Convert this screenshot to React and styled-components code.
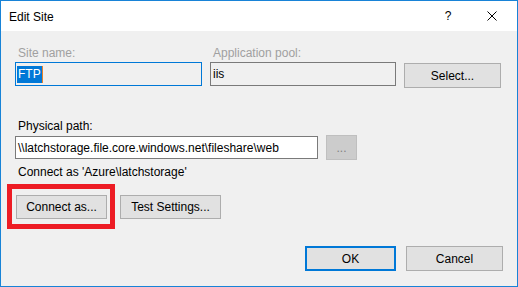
import React from "react";
import styled, { createGlobalStyle } from "styled-components";

const GlobalStyle = createGlobalStyle`
  html, body {
    margin: 0;
    padding: 0;
    background: #ffffff;
  }
  * {
    box-sizing: border-box;
  }
`;

function CloseIcon() {
  return (
    <svg width="10" height="10" viewBox="0 0 10 10">
      <path d="M0.5 0.5 L9.5 9.5 M9.5 0.5 L0.5 9.5" stroke="#000" strokeWidth="1" fill="none" />
    </svg>
  );
}

function Field({ label, disabled, width, children }) {
  return (
    <FieldGroup width={width}>
      <Label disabled={disabled}>{label}</Label>
      {children}
    </FieldGroup>
  );
}

export default function App() {
  return (
    <>
      <GlobalStyle />
      <Window>
        <TitleBar>
          <Title>Edit Site</Title>
          <TitleButtons>
            <Help>?</Help>
            <CloseButton>
              <CloseIcon />
            </CloseButton>
          </TitleButtons>
        </TitleBar>
        <Body>
          <TopRow>
            <Field label="Site name:" disabled width={187}>
              <TextBox focused readOnly>
                <Selection>FTP</Selection>
                <Caret />
              </TextBox>
            </Field>
            <Field label="Application pool:" disabled width={186}>
              <TextBox readOnly>iis</TextBox>
            </Field>
            <Button width={97} height={25} style={{ marginTop: 18 }}>
              Select...
            </Button>
          </TopRow>

          <PathBlock>
            <Label>Physical path:</Label>
            <PathRow>
              <TextBox width={303} height={23}>
                \\latchstorage.file.core.windows.net\fileshare\web
              </TextBox>
              <Button width={31} height={25} disabled>
                ...
              </Button>
            </PathRow>
          </PathBlock>

          <Info>Connect as 'Azure\latchstorage'</Info>

          <ActionRow>
            <Highlighted>
              <Button width={91} height={24}>
                Connect as...
              </Button>
              <RedFrame />
            </Highlighted>
            <Button width={101} height={24}>
              Test Settings...
            </Button>
          </ActionRow>

          <Footer>
            <Button width={91} height={25} primary>
              OK
            </Button>
            <Button width={97} height={25}>
              Cancel
            </Button>
          </Footer>
        </Body>
      </Window>
    </>
  );
}

const Window = styled.div`
  width: 518px;
  height: 287px;
  border: 1px solid #1883d7;
  display: flex;
  flex-direction: column;
  font-family: "Liberation Sans", Arial, sans-serif;
  font-size: 12px;
  color: #000;
`;

const TitleBar = styled.div`
  height: 30px;
  background: #ffffff;
  display: flex;
  align-items: center;
  justify-content: space-between;
  padding-left: 8px;
`;

const Title = styled.div`
  font-size: 12px;
  line-height: 16px;
  padding-top: 1px;
`;

const TitleButtons = styled.div`
  display: flex;
  align-items: center;
  height: 100%;
  padding-right: 2px;
`;

const Help = styled.div`
  width: 46px;
  text-align: center;
  font-size: 12px;
  line-height: 16px;
  padding-left: 4px;
`;

const CloseButton = styled.div`
  width: 46px;
  display: flex;
  justify-content: center;
  align-items: center;
`;

const Body = styled.div`
  flex: 1;
  background: #f0f0f0;
  padding: 14px 14px 15px 14px;
  display: flex;
  flex-direction: column;
`;

const TopRow = styled.div`
  display: flex;
  align-items: flex-start;
  gap: 8px;
`;

const FieldGroup = styled.div`
  width: ${({ width }) => width}px;
  display: flex;
  flex-direction: column;
`;

const Label = styled.div`
  line-height: 16px;
  margin-bottom: 1px;
  padding-left: 3px;
  color: ${({ disabled }) => (disabled ? "#a0a0a0" : "#000")};
`;

const TextBox = styled.div`
  width: ${({ width }) => (width ? `${width}px` : "100%")};
  height: ${({ height }) => height || 24}px;
  border: 1px solid ${({ focused }) => (focused ? "#0078d7" : "#7a7a7a")};
  background: ${({ readOnly }) => (readOnly ? "#f0f0f0" : "#ffffff")};
  display: flex;
  align-items: center;
  padding-left: 2px;
  white-space: nowrap;
  overflow: hidden;
`;

const Selection = styled.span`
  background: #0078d7;
  color: #ffffff;
  line-height: 17px;
  padding: 0 1px;
  margin-left: -1px;
`;

const Caret = styled.span`
  width: 1px;
  height: 17px;
  background: #e8822a;
`;

const Button = styled.div`
  width: ${({ width }) => width}px;
  height: ${({ height }) => height}px;
  flex-shrink: 0;
  display: flex;
  align-items: center;
  justify-content: center;
  background: ${({ disabled }) => (disabled ? "#cccccc" : "#e1e1e1")};
  border: ${({ primary }) => (primary ? "2px solid #0078d7" : "1px solid #adadad")};
  border-color: ${({ disabled, primary }) =>
    disabled ? "#bfbfbf" : primary ? "#0078d7" : "#adadad"};
  color: ${({ disabled }) => (disabled ? "#838383" : "#000")};
  line-height: 16px;
`;

const PathBlock = styled.div`
  margin-top: 30px;
  display: flex;
  flex-direction: column;
`;

const PathRow = styled.div`
  display: flex;
  align-items: center;
  gap: 8px;
`;

const Info = styled.div`
  margin-top: 4px;
  padding-left: 3px;
  line-height: 16px;
`;

const ActionRow = styled.div`
  margin-top: 15px;
  display: flex;
  align-items: center;
  gap: 13px;
  padding-left: 1px;
`;

const Highlighted = styled.div`
  position: relative;
`;

const RedFrame = styled.div`
  position: absolute;
  left: -9px;
  right: -8px;
  top: -11px;
  bottom: -10px;
  border: 5px solid #ed1c24;
  pointer-events: none;
`;

const Footer = styled.div`
  margin-top: auto;
  display: flex;
  justify-content: flex-end;
  gap: 10px;
`;
